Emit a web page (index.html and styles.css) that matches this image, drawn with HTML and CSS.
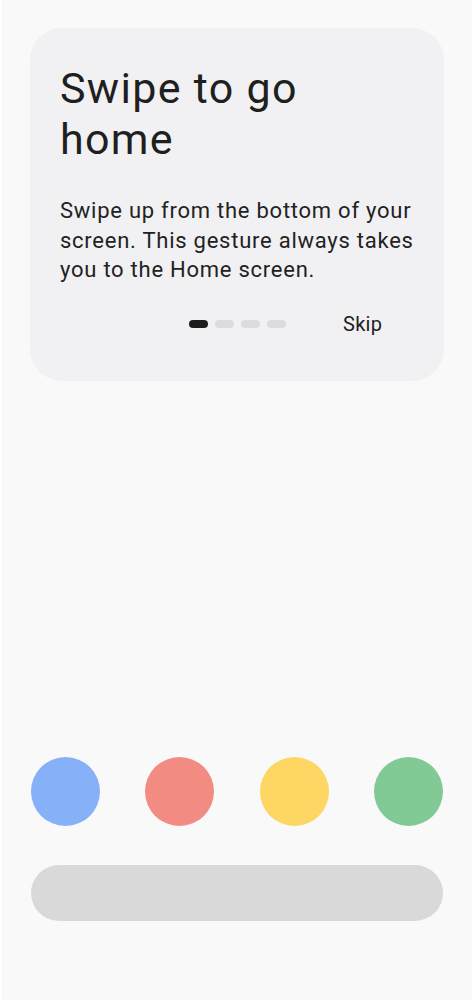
FILE: index.html
```html
<!DOCTYPE html>
<html lang="en">
<head>
    <meta charset="UTF-8">
    <meta name="viewport" content="width=device-width, initial-scale=1.0">
    <title>Swipe to go home</title>
    <link rel="stylesheet" href="styles.css">
</head>
<body>
    <div class="screen">
        <div class="card">
            <h1 class="title">Swipe to go home</h1>
            <p class="desc">Swipe up from the bottom of your screen. This gesture always takes you to the Home screen.</p>
            <div class="footer">
                <div class="dots">
                    <span class="dot active"></span>
                    <span class="dot"></span>
                    <span class="dot"></span>
                    <span class="dot"></span>
                </div>
                <button class="skip">Skip</button>
            </div>
        </div>
        <div class="apps">
            <span class="app blue"></span>
            <span class="app red"></span>
            <span class="app yellow"></span>
            <span class="app green"></span>
        </div>
        <div class="search"></div>
    </div>
</body>
</html>
```

FILE: styles.css
```css
body {
    margin: 0;
    font-family: Roboto, "Noto Sans", sans-serif;
    background-color: #ffffff;
    color: #1f1f1f;
}
.screen {
    height: 1000px;
    box-sizing: border-box;
    margin: 0 2px;
    padding: 28px 28px 0 28px;
    background-color: #f9f9f9;
    display: flex;
    flex-direction: column;
}
.card {
    height: 353px;
    box-sizing: border-box;
    padding: 35px 30px 0 30px;
    background-color: #f1f1f3;
    border-radius: 32px;
}
.title {
    margin: 0;
    font-size: 43px;
    font-weight: 400;
    line-height: 51px;
    letter-spacing: 1.3px;
    width: 300px;
}
.desc {
    margin: 31px 0 0 0;
    font-size: 22px;
    line-height: 29.5px;
    letter-spacing: 0.75px;
    color: #222;
}
.footer {
    display: flex;
    align-items: center;
    height: 24px;
    margin-top: 27px;
    padding-left: 129px;
}
.dots {
    display: flex;
    gap: 7px;
}
.dot {
    width: 19px;
    height: 8px;
    border-radius: 4px;
    background-color: #dcdcde;
}
.dot.active {
    background-color: #1c1c1c;
}
.skip {
    margin-left: 57px;
    padding: 0;
    border: none;
    background: none;
    font-family: inherit;
    font-size: 20px;
    letter-spacing: 0.3px;
    color: #222;
}
.apps {
    margin-top: auto;
    display: flex;
    justify-content: space-between;
    padding: 0 1px;
}
.app {
    width: 69px;
    height: 69px;
    border-radius: 50%;
}
.blue { background-color: #86b1f8; }
.red { background-color: #f28b82; }
.yellow { background-color: #fdd663; }
.green { background-color: #81c995; }
.search {
    margin: 39px 1px 79px 1px;
    height: 56px;
    border-radius: 28px;
    background-color: #d9d9d9;
}
```
